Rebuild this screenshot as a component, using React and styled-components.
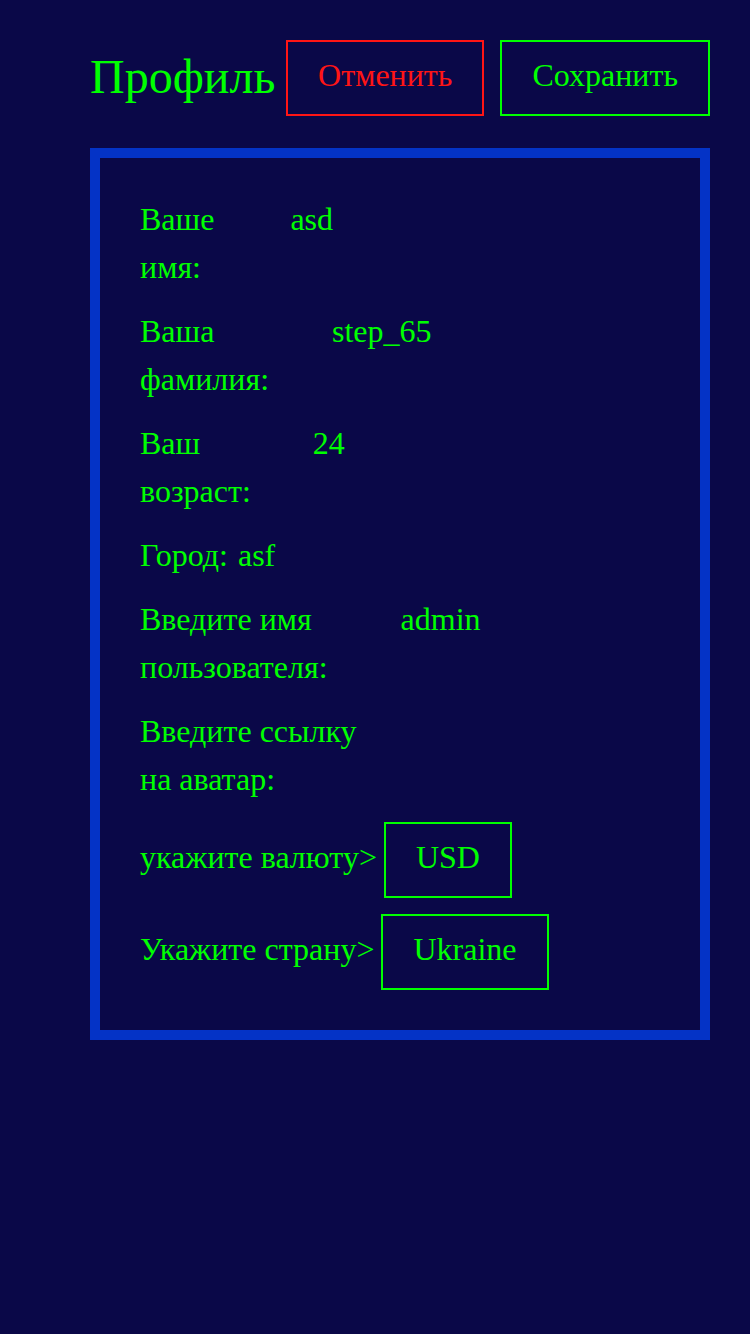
import React from "react";
import styled, { createGlobalStyle } from "styled-components";

const Global = createGlobalStyle`
  html, body {
    margin: 0;
    padding: 0;
    background: #0a0848;
  }
  body {
    font-family: "Liberation Serif", "Times New Roman", serif;
    min-height: 100vh;
  }
`;

const Page = styled.div`
  padding: 40px 40px 0 90px;
  display: flex;
  flex-direction: column;
  gap: 32px;
`;

const Header = styled.header`
  display: flex;
  align-items: center;
`;

const Title = styled.h1`
  margin: 0 0 3px;
  font-size: 48px;
  font-weight: normal;
  color: #00ff00;
  line-height: 70px;
`;

const Actions = styled.div`
  margin-left: auto;
  display: flex;
  gap: 16px;
`;

const Button = styled.button`
  font-family: inherit;
  font-size: 32px;
  line-height: 48px;
  background: transparent;
  color: ${(p) => (p.$danger ? "#ff1515" : "#00ff00")};
  border: 2px solid ${(p) => (p.$danger ? "#ff1515" : "#00ff00")};
  padding: 9px 30px 15px;
  cursor: pointer;
`;

const Card = styled.section`
  border: 10px solid #0433c6;
  padding: 37px 40px 40px;
  display: flex;
  flex-direction: column;
  gap: 16px;
`;

const Row = styled.div`
  display: flex;
  align-items: ${(p) => (p.$select ? "baseline" : "flex-start")};
  margin-top: ${(p) => p.$mt || 0}px;
  font-size: 32px;
  line-height: 48px;
  color: #00ff00;
`;

const Label = styled.label`
  width: ${(p) => p.$w || "min-content"};
  flex: none;
`;

const Value = styled.span`
  margin-left: ${(p) => p.$offset}px;
`;

const SelectBox = styled.div`
  margin-left: 7px;
  border: 2px solid #00ff00;
  padding: 9px 30px 15px;
  color: #00ff00;
`;

const fields = [
  { label: "Ваше имя:", value: "asd", offset: 76 },
  { label: "Ваша фамилия:", value: "step_65", offset: 63 },
  { label: "Ваш возраст:", value: "24", offset: 62 },
  { label: "Город:", value: "asf", offset: 10 },
  { label: "Введите имя пользователя:", value: "admin", offset: 73 },
  { label: "Введите ссылку на аватар:", value: "", offset: 0, w: "230px" },
];

export default function App() {
  return (
    <>
      <Global />
      <Page>
        <Header>
          <Title>Профиль</Title>
          <Actions>
            <Button $danger>Отменить</Button>
            <Button>Сохранить</Button>
          </Actions>
        </Header>
        <Card>
          {fields.map((f) => (
            <Row key={f.label}>
              <Label $w={f.w}>{f.label}</Label>
              {f.value && <Value $offset={f.offset}>{f.value}</Value>}
            </Row>
          ))}
          <Row $select $mt={3}>
            <Label $w="max-content">укажите валюту&gt;</Label>
            <SelectBox>USD</SelectBox>
          </Row>
          <Row $select>
            <Label $w="max-content">Укажите страну&gt;</Label>
            <SelectBox>Ukraine</SelectBox>
          </Row>
        </Card>
      </Page>
    </>
  );
}
